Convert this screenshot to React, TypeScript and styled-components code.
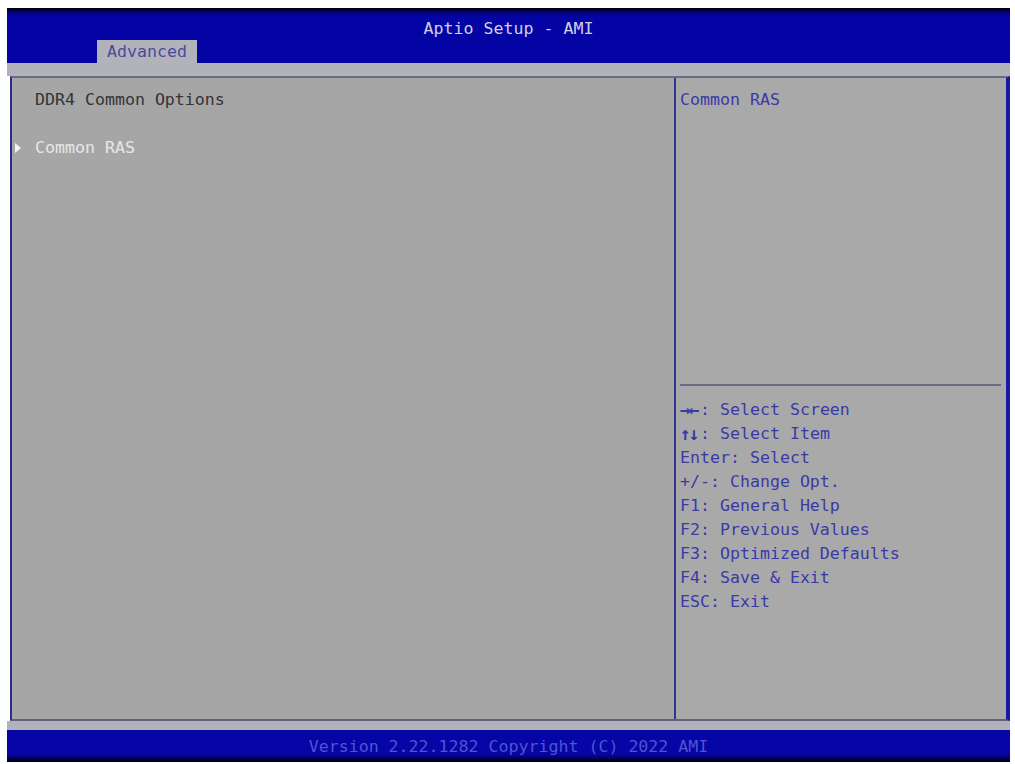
import styled, { createGlobalStyle } from "styled-components";

const GlobalStyle = createGlobalStyle`
  body {
    margin: 0;
    background: #ffffff;
    font-family: "DejaVu Sans Mono", "Liberation Mono", monospace;
  }
`;

const Screen = styled.div`
  display: flex;
  flex-direction: column;
  width: 1003px;
  height: 754px;
  margin: 8px 0 0 7px;
  font-size: 16.6px;
  line-height: 24px;
`;

// Header with title and tab
const Header = styled.header`
  display: flex;
  flex-direction: column;
  height: 55px;
  background: linear-gradient(#000000 0px, #02028a 5px, #0404a4 9px, #0404a4 100%);
`;

const Title = styled.div`
  height: 20px;
  margin-top: 11px;
  line-height: 20px;
  text-align: center;
  color: #d0d0e2;
`;

const TabRow = styled.div`
  display: flex;
  margin-top: 1px;
  padding-left: 90px;
`;

const Tab = styled.div`
  width: 100px;
  height: 23px;
  line-height: 23px;
  text-align: center;
  background: #b2b2ba;
  color: #4a4a9c;
`;

const Stripe = styled.div<{ $h: number }>`
  height: ${(p) => p.$h}px;
  background: #b2b2ba;
`;

// Main framed area
const Frame = styled.main`
  display: flex;
  height: 641px;
  margin-left: 3px;
  background: #a6a6a6;
  border-top: 2px solid #6c6c80;
  border-bottom: 2px solid #62627a;
  border-left: 2px solid #2c2c8a;
  border-right: 4px solid #1818a6;
`;

const LeftPanel = styled.section`
  width: 662px;
  padding: 10px 0 0 0;
  border-right: 2px solid #34348e;
`;

const Line = styled.div<{ $tone?: "dark" | "light" | "blue" }>`
  display: flex;
  align-items: center;
  height: 24px;
  white-space: pre;
  color: ${(p) =>
    p.$tone === "light" ? "#e6e6ea" : p.$tone === "blue" ? "#3a3aa6" : "#333338"};
`;

const Indent = styled.span`
  display: inline-block;
  width: 23px;
  position: relative;
`;

const Arrow = styled.span`
  position: absolute;
  left: 3px;
  top: -5px;
  width: 0;
  height: 0;
  border-top: 5px solid transparent;
  border-bottom: 5px solid transparent;
  border-left: 6px solid #f4f4f8;
`;

const KeyGlyph = styled.span`
  font-weight: bold;
  font-size: 18px;
  letter-spacing: -2px;
  width: 20px;
`;

const RightPanel = styled.aside`
  display: flex;
  flex-direction: column;
  flex: 1;
  background: #a9a9a9;
`;

const HelpText = styled.div`
  height: 296px;
  padding: 10px 0 0 4px;
`;

const Divider = styled.div`
  height: 2px;
  margin: 0 5px 0 4px;
  background: #6a6a86;
`;

const Keys = styled.div`
  padding: 12px 0 0 4px;
`;

const Footer = styled.footer`
  height: 32px;
  line-height: 33px;
  text-align: center;
  color: #5252d2;
  background: linear-gradient(#0606a6 0, #0606a6 24px, #020260 28px, #000000 32px);
`;

const keyLines: [string, string][] = [
  ["→←", ": Select Screen"],
  ["↑↓", ": Select Item"],
  ["", "Enter: Select"],
  ["", "+/-: Change Opt."],
  ["", "F1: General Help"],
  ["", "F2: Previous Values"],
  ["", "F3: Optimized Defaults"],
  ["", "F4: Save & Exit"],
  ["", "ESC: Exit"],
];

export default function App() {
  return (
    <>
      <GlobalStyle />
      <Screen>
        <Header>
          <Title>Aptio Setup - AMI</Title>
          <TabRow>
            <Tab>Advanced</Tab>
          </TabRow>
        </Header>
        <Stripe $h={13} />
        <Frame>
          <LeftPanel>
            <Line>
              <Indent />
              DDR4 Common Options
            </Line>
            <Line />
            <Line $tone="light">
              <Indent>
                <Arrow />
              </Indent>
              Common RAS
            </Line>
          </LeftPanel>
          <RightPanel>
            <HelpText>
              <Line $tone="blue">Common RAS</Line>
            </HelpText>
            <Divider />
            <Keys>
              {keyLines.map(([glyph, text]) => (
                <Line key={text} $tone="blue">
                  {glyph && <KeyGlyph>{glyph}</KeyGlyph>}
                  {text}
                </Line>
              ))}
            </Keys>
          </RightPanel>
        </Frame>
        <Stripe $h={9} />
        <Footer>Version 2.22.1282 Copyright (C) 2022 AMI</Footer>
      </Screen>
    </>
  );
}
